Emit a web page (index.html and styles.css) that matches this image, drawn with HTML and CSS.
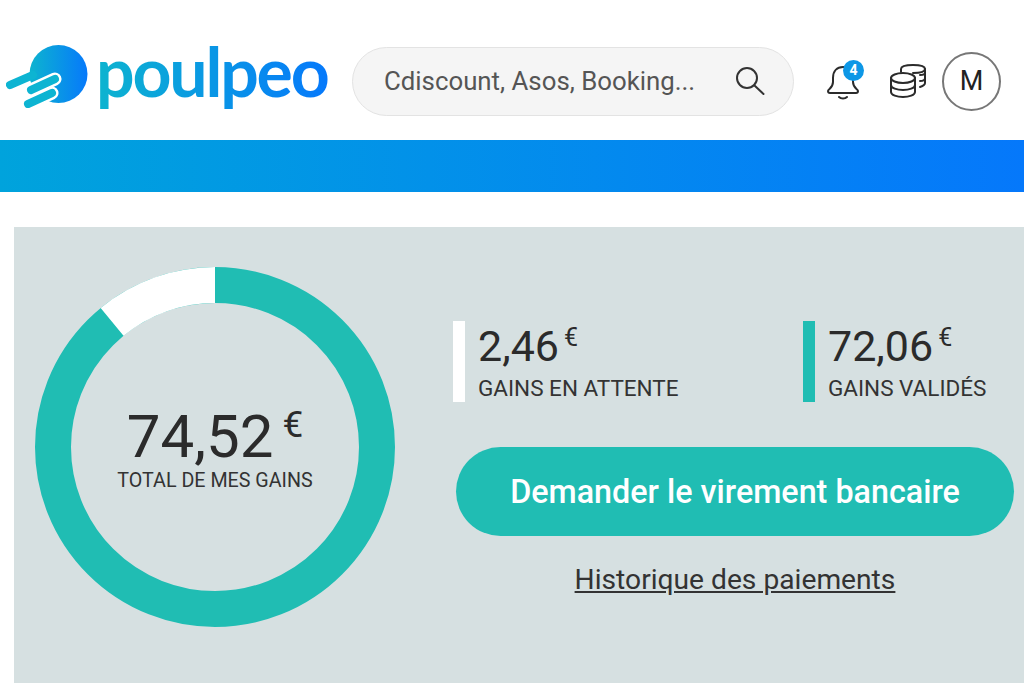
FILE: index.html
```html
<!DOCTYPE html>
<html lang="fr">
<head>
    <meta charset="UTF-8">
    <meta name="viewport" content="width=device-width, initial-scale=1.0">
    <title>Poulpeo - Mes gains</title>
    <link rel="stylesheet" href="styles.css">
</head>
<body>
    <header class="header">
        <a class="logo" href="#">
            <svg class="logo-mark" width="84" height="68" viewBox="0 0 84 68">
                <defs>
                    <linearGradient id="mark-fill" x1="0" x2="1" y1="0" y2="0">
                        <stop offset="0" stop-color="#0db4cf"/>
                        <stop offset="1" stop-color="#0679fb"/>
                    </linearGradient>
                </defs>
                <circle cx="52.500" cy="34" r="29" fill="url(#mark-fill)"/>
                <g fill="none" stroke-linecap="round">
                    <path d="M25 50 L49 39" stroke="#fff" stroke-width="13"/>
                    <path d="M22 64 L46 53" stroke="#fff" stroke-width="13"/>
                    <path d="M4 45 L27 35" stroke="#0db4d2" stroke-width="8"/>
                    <path d="M25 50 L49 39" stroke="#0db4d2" stroke-width="8"/>
                    <path d="M22 64 L46 53" stroke="#0db4d2" stroke-width="8"/>
                </g>
            </svg>
            <span class="logo-text">poulpeo</span>
        </a>

        <div class="search">
            <span class="search-text">Cdiscount, Asos, Booking...</span>
            <svg width="30" height="30" viewBox="0 0 30 30" fill="none" stroke="#333" stroke-width="2" stroke-linecap="round">
                <circle cx="12" cy="12" r="10"/>
                <path d="M19.500 19.500 L28.500 28"/>
            </svg>
        </div>

        <div class="header-icons">
            <div class="bell">
                <svg width="34" height="38" viewBox="0 0 34 38" fill="none" stroke="#2b2b2b" stroke-width="2" stroke-linecap="round" stroke-linejoin="round">
                    <path d="M2 29 C2 27 7 26 7 20 L7 16 C7 9 11 5 17 5 C23 5 27 9 27 16 L27 20 C27 26 32 27 32 29 C32 30.500 31 31 30 31 L4 31 C3 31 2 30.500 2 29 Z"/>
                    <path d="M13 35 C15 37 19 37 21 35"/>
                </svg>
                <span class="badge">4</span>
            </div>
            <svg class="coins" width="38" height="36" viewBox="0 0 38 36" fill="none" stroke="#2b2b2b" stroke-width="2" stroke-linecap="round" stroke-linejoin="round">
                <path d="M12 9 L12 6 C12 3 18 2 24 2 C30 2 36 3 36 6 C36 9 30 10 24 10"/>
                <path d="M36 6 L36 20 C36 22 34 23 31 24"/>
                <path d="M31 12 C34 12 36 11 36 10 M31 18 C34 18 36 17 36 15"/>
                <ellipse cx="14" cy="15" rx="12" ry="5"/>
                <path d="M2 15 L2 29 C2 32 8 34 14 34 C20 34 26 32 26 29 L26 15"/>
                <path d="M2 22 C2 25 8 27 14 27 C20 27 26 25 26 22"/>
            </svg>
            <div class="avatar">M</div>
        </div>
    </header>

    <div class="band"></div>

    <main class="panel">
        <svg class="ring" width="360" height="360" viewBox="0 0 360 360">
            <circle cx="180" cy="180" r="162" fill="none" stroke="#20bdb3" stroke-width="36"/>
            <circle cx="180" cy="180" r="162" fill="none" stroke="#fff" stroke-width="36" stroke-dasharray="112 906" stroke-dashoffset="112" transform="rotate(-90 180 180)"/>
        </svg>
        <div class="total">
            <div class="total-amount">74,52<sup class="total-euro">€</sup></div>
            <div class="total-label">TOTAL DE MES GAINS</div>
        </div>

        <section class="details">
            <div class="stats">
                <div class="stat">
                    <div class="stat-amount">2,46<sup class="stat-euro">€</sup></div>
                    <div class="stat-label">GAINS EN ATTENTE</div>
                </div>
                <div class="stat stat-valid">
                    <div class="stat-amount">72,06<sup class="stat-euro">€</sup></div>
                    <div class="stat-label">GAINS VALIDÉS</div>
                </div>
            </div>
            <a class="btn" href="#">Demander le virement bancaire</a>
            <a class="history" href="#">Historique des paiements</a>
        </section>
    </main>
</body>
</html>
```

FILE: styles.css
```css
body {
    font-family: Roboto, Arial, sans-serif;
    color: #333;
    background: #fff;
    margin: 0;
}

a {
    color: inherit;
}

.header {
    height: 140px;
    display: flex;
    align-items: center;
    padding: 22px 0 0 6px;
    box-sizing: border-box;
}

.logo {
    display: flex;
    align-items: center;
    gap: 6px;
    width: 346px;
    margin-top: -14px;
    text-decoration: none;
}

.logo-mark {
    flex: none;
}

.logo-text {
    font-family: Lato, Arial, sans-serif;
    font-size: 68px;
    font-weight: 700;
    line-height: 76px;
    letter-spacing: -2.200px;
    margin-top: -6px;
    background: linear-gradient(90deg, #0db4cf, #0679fb);
    -webkit-background-clip: text;
    background-clip: text;
    color: transparent;
}

.search {
    width: 442px;
    height: 69px;
    box-sizing: border-box;
    display: flex;
    align-items: center;
    justify-content: space-between;
    padding: 0 28px 0 31px;
    background: #f5f5f5;
    border: 1.5px solid #e3e3e3;
    border-radius: 35px;
}

.search-text {
    font-size: 25.800px;
    color: #555;
}

.header-icons {
    display: flex;
    align-items: center;
    margin-left: 32px;
}

.bell {
    position: relative;
    width: 34px;
    height: 38px;
}

.badge {
    position: absolute;
    top: -2px;
    right: -4px;
    width: 21px;
    height: 21px;
    border-radius: 50%;
    background: #0d97e6;
    color: #fff;
    font-size: 14px;
    font-weight: 700;
    line-height: 21px;
    text-align: center;
}

.coins {
    margin-left: 29px;
}

.avatar {
    width: 59px;
    height: 59px;
    box-sizing: border-box;
    margin-left: 15px;
    border: 2px solid #777;
    border-radius: 50%;
    font-size: 27px;
    line-height: 55px;
    text-align: center;
    color: #222;
}

.band {
    height: 52px;
    background: linear-gradient(90deg, #00a3dc, #0578fb);
}

.panel {
    position: relative;
    display: flex;
    margin: 35px 0 0 14px;
    padding: 40px 0 0 21px;
    height: 456px;
    box-sizing: border-box;
    background: #d6e0e1;
}

.ring {
    flex: none;
}

.total {
    position: absolute;
    left: 21px;
    top: 40px;
    width: 360px;
    height: 360px;
    box-sizing: border-box;
    padding-top: 6px;
    display: flex;
    flex-direction: column;
    align-items: center;
    justify-content: center;
}

.total-amount {
    font-size: 60px;
    line-height: 60px;
    color: #2b2b2b;
}

.total-euro {
    font-size: 37px;
    line-height: 0;
    vertical-align: 20px;
    margin-left: 9px;
}

.total-label {
    font-size: 19.700px;
    line-height: 24px;
    margin-top: 2px;
    color: #333;
}

.details {
    margin-left: 58px;
    padding-top: 54px;
    width: 561px;
    display: flex;
    flex-direction: column;
    align-items: center;
}

.stats {
    display: flex;
    width: 100%;
}

.stat {
    width: 350px;
    height: 81px;
    box-sizing: border-box;
    padding-left: 13px;
    border-left: 12px solid #fff;
}

.stat-valid {
    width: 200px;
    border-left-color: #20bdb3;
}

.stat-amount {
    font-size: 43px;
    line-height: 50px;
    color: #2b2b2b;
}

.stat-euro {
    font-size: 25px;
    line-height: 0;
    vertical-align: 15px;
    margin-left: 5px;
}

.stat-label {
    font-size: 22.500px;
    line-height: 26px;
    margin-top: 4px;
    white-space: nowrap;
}

.btn {
    width: 558px;
    height: 89px;
    margin: 45px 0 0 3px;
    border-radius: 45px;
    background: #20bdb3;
    color: #fff;
    font-size: 32.300px;
    font-weight: 500;
    line-height: 91px;
    text-align: center;
    text-decoration: none;
}

.history {
    margin: 27px 0 0 3px;
    font-size: 28.200px;
    line-height: 34px;
    text-decoration: underline;
}
```
